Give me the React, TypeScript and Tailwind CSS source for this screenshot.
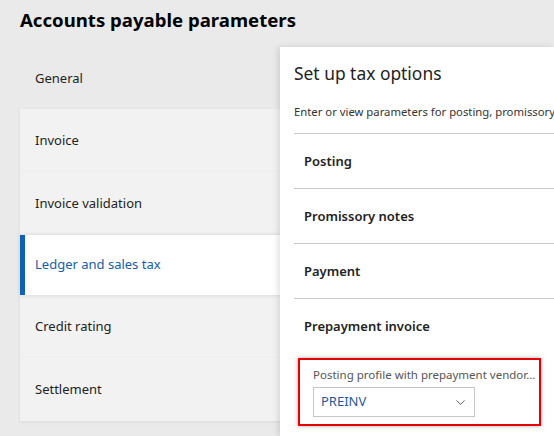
import React from 'react';
import { ChevronDown } from 'lucide-react';

const navItems = [
  { label: 'General', tone: 'bg' },
  { label: 'Invoice', tone: 'panel' },
  { label: 'Invoice validation', tone: 'panel' },
  { label: 'Ledger and sales tax', tone: 'active' },
  { label: 'Credit rating', tone: 'panel' },
  { label: 'Settlement', tone: 'panel' },
];

const sections = ['Posting', 'Promissory notes', 'Payment', 'Prepayment invoice'];

const App = () => {
  return (
    <div
      className="h-[436px] w-[554px] overflow-hidden bg-[#eaeaea] text-[#222]"
      style={{ fontFamily: '"Noto Sans", "Open Sans", sans-serif' }}
    >
      <h1 className="h-[47px] pl-[20px] pt-[6px] text-[18.6px] font-bold leading-[28px] text-black">
        Accounts payable parameters
      </h1>

      <div className="flex">
        {/* left navigation */}
        <div className="ml-[20px] flex w-[260px] shrink-0 flex-col">
          {navItems.map((item) => (
            <div
              key={item.label}
              className={`flex items-center text-[13px] ${
                item.tone === 'active'
                  ? 'relative z-10 h-[60px] border-l-[5px] border-[#0f62b0] bg-white pl-[10px] text-[#1360a8] shadow-[0_0_4px_rgba(0,0,0,0.15)]'
                  : item.tone === 'panel'
                  ? 'h-[63px] bg-[#f2f2f2] pl-[15px] pt-[1px] shadow-[0_1px_3px_rgba(0,0,0,0.08)]'
                  : 'h-[62px] bg-[#eaeaea] pl-[15px] pt-[1px]'
              }`}
            >
              {item.label}
            </div>
          ))}
        </div>

        {/* right content */}
        <div className="relative z-20 h-[389px] flex-1 bg-white pl-[14px] shadow-[-2px_0_6px_rgba(0,0,0,0.12)]">
          <h2 className="pt-[13px] text-[17.4px] leading-[26px] text-[#222]">Set up tax options</h2>
          <p className="mt-[18px] whitespace-nowrap text-[11.3px] leading-[16px] text-[#333]">
            Enter or view parameters for posting, promissory
          </p>
          <div className="mt-[13px]">
            {sections.map((s) => (
              <div key={s} className="flex h-[55px] items-center border-t border-[#c8c8c8] pl-[10px] pt-[2px] text-[13px] font-semibold text-[#222]">
                {s}
              </div>
            ))}
          </div>

          <div className="ml-[4px] mt-[5px] w-[243px] border-2 border-[#e60000] px-[13px] pb-[7px] pt-[7px] shadow-[0_0_4px_rgba(0,0,0,0.35)]">
            <div className="whitespace-nowrap text-[11.5px] leading-[16px] text-[#555]">
              Posting profile with prepayment vendor...
            </div>
            <div className="mt-[4px] flex h-[30px] w-[162px] items-center justify-between border border-[#c6c6c6] pl-[7px] pr-[6px]">
              <span className="text-[13px] text-[#1f58a0]">PREINV</span>
              <ChevronDown className="h-[15px] w-[15px] text-[#555]" strokeWidth={1.5} />
            </div>
          </div>
        </div>
      </div>
    </div>
  );
};

export default App;
